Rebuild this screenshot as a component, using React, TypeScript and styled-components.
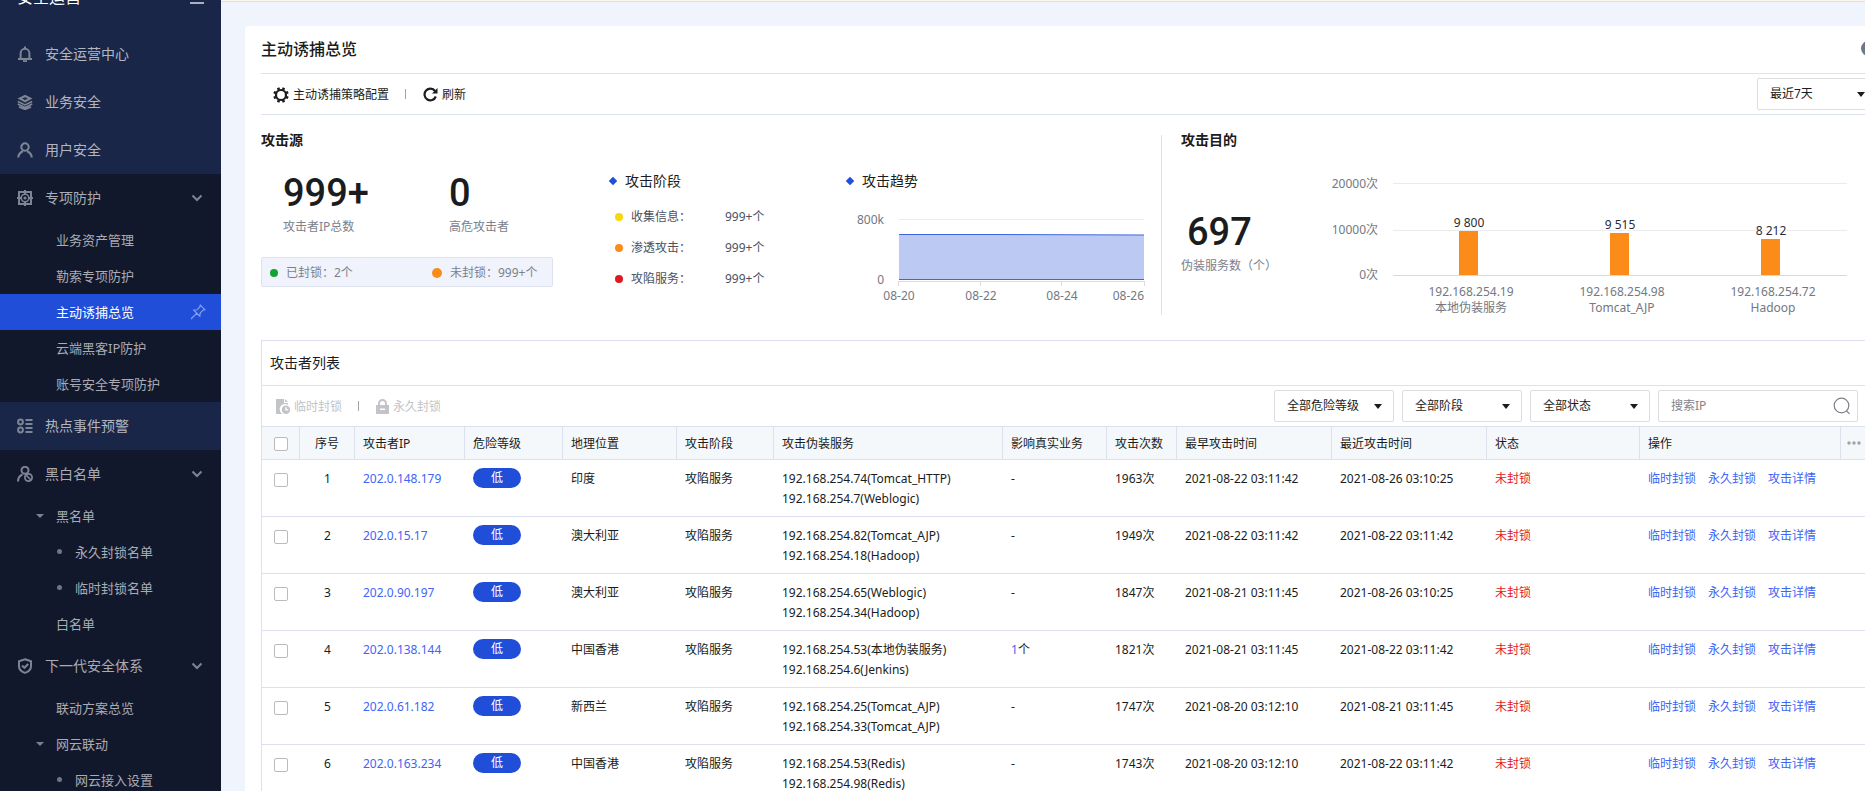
import React from "react";
import styled, { createGlobalStyle } from "styled-components";

const GlobalStyle = createGlobalStyle`
  *, *::before, *::after { box-sizing: border-box; }
  body {
    margin: 0;
    background: #f0f4fc;
    color: #1a1c20;
    font-family: "Noto Sans", "Noto Sans CJK SC", sans-serif;
    font-size: 12px;
    line-height: 20px;
  }
  button, input, select { font: inherit; color: inherit; }
  ul { list-style: none; margin: 0; padding: 0; }
  h1, h2, h3, p { margin: 0; }
`;

/* ---------- shell ---------- */

const Shell = styled.div`
  display: flex;
  height: 100vh;
  overflow: hidden;
`;

const Sidebar = styled.nav`
  flex: none;
  width: 221px;
  overflow: hidden;
  background: #12182b;
  color: #a9acb5;
`;

const SidebarScroll = styled.div`
  margin-top: -36px;
`;

const SidebarHeader = styled.div`
  display: flex;
  align-items: center;
  justify-content: space-between;
  height: 66px;
  padding: 0 17px;
  background: #1a2647;
  color: #fff;
  font-size: 16px;
  line-height: 24px;
`;

const IconButton = styled.button`
  display: flex;
  padding: 0;
  border: 0;
  background: none;
  color: #a9b0c2;
`;

const NavItem = styled.a<{ $navy?: boolean }>`
  display: flex;
  align-items: center;
  gap: 12px;
  height: 48px;
  padding: 0 18px 0 17px;
  background: ${(p) => (p.$navy ? "#1a2647" : "transparent")};
  color: ${(p) => (p.$navy ? "#b1b6c2" : "#a9acb5")};
  font-size: 14px;
  text-decoration: none;

  svg { flex: none; color: #7d8494; }
  span { flex: 1; }
`;

const SubItem = styled.a<{ $active?: boolean; $level?: number }>`
  display: flex;
  align-items: center;
  height: 36px;
  padding: 0 15px 1px ${(p) => (p.$level === 2 ? 57 : 36)}px;
  background: ${(p) => (p.$active ? "#204ed9" : "transparent")};
  color: ${(p) => (p.$active ? "#fff" : "#a9acb5")};
  font-size: 13px;
  text-decoration: none;

  span { flex: 1; }
`;

const Caret = styled.i<{ $hidden?: boolean }>`
  width: 8px;
  margin-right: 12px;
  border: 4px solid transparent;
  border-width: 4px 4px 0;
  border-top-color: ${(p) => (p.$hidden ? "transparent" : "#7d818c")};
`;

const Bullet = styled.i`
  width: 5px;
  height: 5px;
  margin-right: 13px;
  border-radius: 50%;
  background: #71757f;
`;

const Main = styled.main`
  flex: 1;
  min-width: 0;
  overflow: hidden;
  border-top: 1px solid #fdf7ec;
  box-shadow: inset 0 1px #f2dcc4;
`;

const Card = styled.section`
  margin: 25px -28px 0 24px;
  padding: 0 16px;
  border-radius: 3px;
  background: #fff;
`;

const CardHeader = styled.header`
  display: flex;
  align-items: center;
  justify-content: space-between;
  height: 48px;
  padding: 0 1px 2px 0;
  border-bottom: 1px solid #dde3ec;
`;

const Title = styled.h1`
  font-size: 16px;
  font-weight: 500;
  line-height: 24px;
`;

const InfoDot = styled.button`
  width: 15px;
  height: 15px;
  padding: 0;
  border: 0;
  border-radius: 50%;
  background: #6f7787;
  color: #fff;
  font-size: 10px;
  line-height: 15px;
`;

const Toolbar = styled.div<{ $list?: boolean }>`
  display: flex;
  align-items: center;
  height: 41px;
  padding: ${(p) => (p.$list ? "0 18px 0 14px" : "0 0 0 12px")};
  border-bottom: 1px solid ${(p) => (p.$list ? "#dde1ed" : "#dde3ec")};
`;

const ToolButton = styled.button`
  display: flex;
  align-items: center;
  gap: 4px;
  padding: 1px 0 0;
  border: 0;
  background: none;

  &:disabled { color: #c2c4c8; }
`;

const Separator = styled.i`
  width: 1px;
  height: 10px;
  margin: 0 17px 0 16px;
  background: #a0a4ac;
`;

const Spacer = styled.div`
  flex: 1;
`;

const SelectBox = styled.label`
  display: grid;
  align-items: center;
  width: 120px;

  > * { grid-area: 1 / 1; }
`;

const Select = styled.select`
  appearance: none;
  width: 100%;
  height: 32px;
  padding: 0 12px;
  border: 1px solid #dcdddf;
  border-radius: 2px;
  background: #fff;
`;

const SelectArrow = styled.i`
  justify-self: end;
  width: 8px;
  height: 5px;
  margin-right: 12px;
  border: 4px solid transparent;
  border-width: 5px 4px 0;
  border-top-color: #1a1c20;
  pointer-events: none;
`;

const Filters = styled.div`
  display: flex;
  gap: 8px;
`;

const SearchBox = styled.label`
  display: flex;
  align-items: center;
  width: 200px;
  height: 32px;
  padding: 0 6px 0 12px;
  border: 1px solid #dcdddf;
  border-radius: 2px;
  color: #7c8088;
`;

const SearchInput = styled.input`
  flex: 1;
  min-width: 0;
  padding: 0;
  border: 0;
  outline: 0;
  background: none;

  &::placeholder { color: #7f838a; opacity: 1; }
`;

/* ---------- overview ---------- */

const Overview = styled.div`
  display: grid;
  grid-template-columns: 900fr 716fr;
  padding: 20px 0 25px;
`;

const SourcePane = styled.section`
  display: grid;
  grid-template-columns: 348px 237px 1fr;
  grid-template-rows: 12px 1fr;
  height: 180px;
`;

const TargetPane = styled.section`
  display: flex;
  padding-left: 19px;
  border-left: 1px solid #dfe0ea;
`;

const PaneTitle = styled.h2`
  grid-column: 1 / -1;
  margin-top: -5px;
  font-size: 14px;
  font-weight: 600;
  line-height: 20px;
`;

const Counters = styled.div`
  display: flex;
  flex-direction: column;
  padding-top: 22px;
`;

const CounterRow = styled.div`
  display: grid;
  grid-template-columns: 166px auto;
  padding-left: 22px;
`;

const Figure = styled.p`
  font-family: Roboto, "Noto Sans", sans-serif;
  font-size: 38px;
  font-weight: 500;
  line-height: 48px;
`;

const Caption = styled.p`
  color: #7b818d;
`;

const BlockSummary = styled.div`
  display: grid;
  grid-template-columns: 162px auto;
  align-items: center;
  width: 292px;
  height: 30px;
  margin-top: 20px;
  padding: 1px 0 0 8px;
  border: 1px solid #dde2ef;
  border-radius: 2px;
  background: #f0f3fb;
  color: #7b818d;
`;

const Dotted = styled.span<{ $color: string; $size?: number }>`
  display: flex;
  align-items: center;
  gap: 8px;

  &::before {
    content: "";
    width: ${(p) => p.$size || 8}px;
    height: ${(p) => p.$size || 8}px;
    border-radius: 50%;
    background: ${(p) => p.$color};
  }
`;

const SubBlock = styled.div`
  padding-top: 24px;
`;

const SubTitle = styled.h3`
  display: flex;
  align-items: center;
  gap: 9px;
  font-size: 14px;
  font-weight: 400;
  line-height: 20px;

  &::before {
    content: "";
    width: 6px;
    height: 6px;
    margin-left: 1px;
    background: #204ed9;
    transform: rotate(45deg);
  }
`;

const StageList = styled.ul`
  padding: 10px 0 0 6px;
`;

const Stage = styled.li`
  display: grid;
  grid-template-columns: 110px auto;
  align-items: center;
  height: 31px;
  color: #4b5160;
`;

const TrendChart = styled.svg`
  display: block;
  margin-top: 15px;
`;

const ServiceCount = styled.div`
  width: 140px;

  ${Figure} { margin-top: 58px; padding-left: 6px; }
`;

const ChartText = styled.text<{ $dark?: boolean }>`
  font-size: 12px;
  fill: ${(p) => (p.$dark ? "#2b2d33" : "#737883")};
  stroke: ${(p) => (p.$dark ? "#fff" : "none")};
  stroke-width: 3px;
  paint-order: stroke;
`;

/* ---------- list ---------- */

const Panel = styled.section`
  border: 1px solid #dde1ed;
`;

const PanelTitle = styled.h2`
  height: 45px;
  padding-left: 8px;
  border-bottom: 1px solid #dde1ed;
  font-size: 14px;
  font-weight: 400;
  line-height: 44px;
`;

const Table = styled.table`
  width: 100%;
  table-layout: fixed;
  border-collapse: separate;
  border-spacing: 0;
`;

const Th = styled.th<{ $center?: boolean; $tight?: boolean }>`
  height: 33px;
  padding: ${(p) => (p.$tight ? "0 0 5px 6px" : p.$center ? "1px 0 0" : "1px 0 0 8px")};
  border-right: 1px solid #dde1ed;
  border-bottom: 1px solid #dde1ed;
  background: #f4f8fb;
  font-weight: 400;
  text-align: ${(p) => (p.$center ? "center" : "left")};
  white-space: nowrap;
`;

const Td = styled.td<{ $center?: boolean; $danger?: boolean }>`
  height: 57px;
  padding: 9px 0 7px ${(p) => (p.$center ? 0 : 8)}px;
  border-bottom: 1px solid #dde1ed;
  color: ${(p) => (p.$danger ? "#e0191f" : "inherit")};
  text-align: ${(p) => (p.$center ? "center" : "left")};
  vertical-align: top;
  white-space: nowrap;
`;

const Checkbox = styled.input`
  appearance: none;
  display: block;
  width: 14px;
  height: 14px;
  margin: 0 12px;
  border: 1px solid #b9bbbf;
  border-radius: 2px;
  background: #fff;

  td & { margin-top: 4px; }
`;

const Link = styled.a`
  color: #4264f5;
  text-decoration: none;
`;

const Actions = styled.div`
  display: flex;
  gap: 12px;
`;

const Level = styled.span`
  display: block;
  width: 48px;
  height: 20px;
  margin-top: -1px;
  border-radius: 10px;
  background: #204ed9;
  color: #fff;
  text-align: center;
`;

/* ---------- icons ---------- */

const icons: Record<string, React.ReactNode> = {
  bell: (
    <g fill="none" stroke="currentColor" strokeWidth="2">
      <path d="M1 13h14M3.6 13V7.200a4.400 4.400 0 0 1 8.800 0V13M8 2.800V.6" />
      <path d="M6 15.200h4" />
    </g>
  ),
  layers: (
    <g>
      <path fill="currentColor" fillRule="evenodd" d="M8 .8 15.500 4.600 8 8.400.5 4.600zM8 3.200 5.200 4.600 8 6l2.800-1.400z" />
      <path fill="none" stroke="currentColor" strokeWidth="1.700" d="m.8 7.400 7.200 3.500 7.200-3.500M.8 10l7.200 3.500 7.200-3.500M2 12.900l6 2.500 6-2.500" />
    </g>
  ),
  user: (
    <g fill="none" stroke="currentColor" strokeWidth="2.100">
      <circle cx="8" cy="5" r="3.700" />
      <path d="M1.300 15.500c0-3 1.800-5 4.700-6.500M14.700 15.500c0-3-1.800-5-4.700-6.500" />
    </g>
  ),
  target: (
    <g fill="none" stroke="currentColor">
      <path strokeWidth="2" d="M2 2h12v12H2zM8 0v4M8 12v4M0 8h4M12 8h4" />
      <circle cx="8" cy="8" r="3.800" strokeWidth="1.600" />
      <circle cx="8" cy="8" r="1.600" fill="currentColor" stroke="none" />
    </g>
  ),
  list: (
    <g fill="none" stroke="currentColor" strokeWidth="2">
      <circle cx="3.500" cy="4" r="2.400" />
      <circle cx="3.500" cy="12" r="2.400" />
      <path d="M8.500 2h7M8.500 6h7M8.500 10h7M8.500 14h7" />
    </g>
  ),
  userBan: (
    <g fill="none" stroke="currentColor" strokeWidth="2">
      <circle cx="8" cy="4.300" r="3.500" />
      <path d="M1 15.500c0-3.500 1.700-5.800 4.500-7" />
      <circle cx="11.500" cy="11.500" r="3.600" strokeWidth="1.800" />
      <path strokeWidth="1.700" d="m9 9 5 5" />
    </g>
  ),
  shield: (
    <g fill="none" stroke="currentColor" strokeWidth="2">
      <path d="m8 1.300 6 1.900v5c0 3.400-2.400 5.400-6 6.700-3.600-1.300-6-3.300-6-6.700v-5z" />
      <path d="m5 7.600 2.400 2.200 3.800-3.800" />
    </g>
  ),
};

const Icon = ({ name }: { name: string }) => (
  <svg width="16" height="16" viewBox="0 0 16 16" aria-hidden="true">
    {icons[name]}
  </svg>
);

const Chevron = () => (
  <svg width="12" height="8" viewBox="0 0 12 8" fill="none" stroke="currentColor" strokeWidth="2" aria-hidden="true">
    <path d="m1.500 1.500 4.500 4.500 4.500-4.500" />
  </svg>
);

const MenuIcon = () => (
  <svg width="14" height="14" viewBox="0 0 14 14" stroke="currentColor" strokeWidth="2" aria-hidden="true">
    <path d="M0 1h14M0 7h14M0 13h14" />
  </svg>
);

const PinIcon = () => (
  <svg width="16" height="16" viewBox="0 0 16 16" fill="none" stroke="#86a0ec" strokeWidth="1.200" aria-hidden="true">
    <path d="M10.300 1.200 14.800 5.700 13 6.200 10.200 9l-.4 3.200-6-6L7 5.800 9.800 3zM6.600 9.400 1 15" />
  </svg>
);

const GearIcon = () => (
  <svg width="16" height="16" viewBox="0 0 16 16" fill="none" stroke="currentColor" aria-hidden="true">
    <circle cx="8" cy="8" r="5" strokeWidth="2.200" />
    <path
      strokeWidth="2.600"
      d="M6 3 5.100.8M10 3l.9-2.200M6 13l-.9 2.200M10 13l.9 2.200M3 6 .8 5.100M3 10l-2.200.9M13 6l2.200-.9M13 10l2.200.9"
    />
  </svg>
);

const RefreshIcon = () => (
  <svg width="15" height="15" viewBox="0 0 15 15" fill="none" stroke="currentColor" strokeWidth="2.200" aria-hidden="true">
    <path d="M12 4A5.800 5.800 0 1 0 12.800 9.500" />
    <path d="M14.500 1v5.500H9z" fill="currentColor" stroke="none" />
  </svg>
);

const FileClockIcon = () => (
  <svg width="14" height="15" viewBox="0 0 14 15" fill="currentColor" aria-hidden="true">
    <path d="M0 0h8v4h4v1.800A5 5 0 0 0 6.200 15H0zM9 0l3 3H9z" />
    <path d="M10 6.600a4.200 4.200 0 1 0 0 8.400 4.200 4.200 0 0 0 0-8.400zm-.7 1.600h1.400V10.200h1.500v1.400H9.300z" fillRule="evenodd" />
  </svg>
);

const LockIcon = () => (
  <svg width="13" height="15" viewBox="0 0 13 15" aria-hidden="true">
    <path fill="none" stroke="currentColor" strokeWidth="2" d="M3 7V4.500a3.500 3.500 0 0 1 7 0V7" />
    <path fill="currentColor" fillRule="evenodd" d="M0 6h13v9H0zm4 3.500V11h5V9.500z" />
  </svg>
);

const SearchIcon = () => (
  <svg width="18" height="18" viewBox="0 0 18 18" fill="none" stroke="currentColor" strokeWidth="1.200" aria-hidden="true">
    <circle cx="8.500" cy="8.500" r="7.300" />
    <path d="m13.500 13.800 3 3" />
  </svg>
);

const MoreIcon = () => (
  <svg width="14" height="4" viewBox="0 0 14 4" fill="#9fa3aa" aria-hidden="true">
    <circle cx="2" cy="2" r="1.700" />
    <circle cx="7" cy="2" r="1.700" />
    <circle cx="12" cy="2" r="1.700" />
  </svg>
);

/* ---------- data ---------- */

type Child = { label: string; active?: boolean; open?: boolean; level?: number };
type Group = { label: string; icon: string; navy?: boolean; children?: Child[] };

const menu: Group[] = [
  { label: "安全运营中心", icon: "bell", navy: true },
  { label: "业务安全", icon: "layers", navy: true },
  { label: "用户安全", icon: "user", navy: true },
  {
    label: "专项防护",
    icon: "target",
    children: [
      { label: "业务资产管理" },
      { label: "勒索专项防护" },
      { label: "主动诱捕总览", active: true },
      { label: "云端黑客IP防护" },
      { label: "账号安全专项防护" },
    ],
  },
  { label: "热点事件预警", icon: "list", navy: true },
  {
    label: "黑白名单",
    icon: "userBan",
    children: [
      { label: "黑名单", open: true },
      { label: "永久封锁名单", level: 2 },
      { label: "临时封锁名单", level: 2 },
      { label: "白名单" },
    ],
  },
  {
    label: "下一代安全体系",
    icon: "shield",
    children: [
      { label: "联动方案总览" },
      { label: "网云联动", open: true },
      { label: "网云接入设置", level: 2 },
    ],
  },
];

const stages = [
  { label: "收集信息", color: "#fad60c" },
  { label: "渗透攻击", color: "#fb8c1a" },
  { label: "攻陷服务", color: "#e0191f" },
];

const columns = [
  { label: "序号", width: 55, center: true },
  { label: "攻击者IP", width: 110 },
  { label: "危险等级", width: 98 },
  { label: "地理位置", width: 114 },
  { label: "攻击阶段", width: 97 },
  { label: "攻击伪装服务" },
  { label: "影响真实业务", width: 104 },
  { label: "攻击次数", width: 70 },
  { label: "最早攻击时间", width: 155 },
  { label: "最近攻击时间", width: 155 },
  { label: "状态", width: 153 },
  { label: "操作", width: 201 },
];

const rows = [
  { ip: "202.0.148.179", place: "印度", services: ["192.168.254.74(Tomcat_HTTP)", "192.168.254.7(Weblogic)"], real: 0, times: 1963, first: "2021-08-22 03:11:42", last: "2021-08-26 03:10:25" },
  { ip: "202.0.15.17", place: "澳大利亚", services: ["192.168.254.82(Tomcat_AJP)", "192.168.254.18(Hadoop)"], real: 0, times: 1949, first: "2021-08-22 03:11:42", last: "2021-08-22 03:11:42" },
  { ip: "202.0.90.197", place: "澳大利亚", services: ["192.168.254.65(Weblogic)", "192.168.254.34(Hadoop)"], real: 0, times: 1847, first: "2021-08-21 03:11:45", last: "2021-08-26 03:10:25" },
  { ip: "202.0.138.144", place: "中国香港", services: ["192.168.254.53(本地伪装服务)", "192.168.254.6(Jenkins)"], real: 1, times: 1821, first: "2021-08-21 03:11:45", last: "2021-08-22 03:11:42" },
  { ip: "202.0.61.182", place: "新西兰", services: ["192.168.254.25(Tomcat_AJP)", "192.168.254.33(Tomcat_AJP)"], real: 0, times: 1747, first: "2021-08-20 03:12:10", last: "2021-08-21 03:11:45" },
  { ip: "202.0.163.234", place: "中国香港", services: ["192.168.254.53(Redis)", "192.168.254.98(Redis)"], real: 0, times: 1743, first: "2021-08-20 03:12:10", last: "2021-08-22 03:11:42" },
];

const bars = [
  { x: 138, height: 44, value: "9 800", ip: "192.168.254.19", service: "本地伪装服务" },
  { x: 289, height: 42, value: "9 515", ip: "192.168.254.98", service: "Tomcat_AJP" },
  { x: 440, height: 36, value: "8 212", ip: "192.168.254.72", service: "Hadoop" },
];

/* ---------- parts ---------- */

const Dropdown = ({ name, value }: { name: string; value: string }) => (
  <SelectBox>
    <Select aria-label={name} defaultValue={value}>
      <option>{value}</option>
    </Select>
    <SelectArrow />
  </SelectBox>
);

const SideMenu = () => (
  <Sidebar aria-label="安全运营">
    <SidebarScroll>
      <SidebarHeader>
        安全运营
        <IconButton type="button" aria-label="收起菜单">
          <MenuIcon />
        </IconButton>
      </SidebarHeader>
      {menu.map((group) => (
        <React.Fragment key={group.label}>
          <NavItem href="#" $navy={group.navy}>
            <Icon name={group.icon} />
            <span>{group.label}</span>
            {group.children && <Chevron />}
          </NavItem>
          {group.children?.map((item) => (
            <SubItem key={item.label} href="#" $active={item.active} $level={item.level}>
              {item.level === 2 ? <Bullet /> : <Caret $hidden={!item.open} />}
              <span>{item.label}</span>
              {item.active && <PinIcon />}
            </SubItem>
          ))}
        </React.Fragment>
      ))}
    </SidebarScroll>
  </Sidebar>
);

const AttackTrend = () => (
  <TrendChart width="302" height="104" viewBox="0 0 302 104" role="img" aria-label="攻击趋势">
    <path d="M53 13.500h245" stroke="#ebebeb" />
    <path d="M53 28.500 298 29v45H53z" fill="#bcc9f3" />
    <path d="M53 28.500h100L298 29M53 73.500h245" fill="none" stroke="#3c66dc" />
    <path d="M53 75.500h245M52.500 75v5M134.500 75v5M215.500 75v5M298.500 75v5" stroke="#dcdcdc" />
    <ChartText x="38" y="18" textAnchor="end">800k</ChartText>
    <ChartText x="38" y="78" textAnchor="end">0</ChartText>
    <ChartText x="53" y="94" textAnchor="middle">08-20</ChartText>
    <ChartText x="135" y="94" textAnchor="middle">08-22</ChartText>
    <ChartText x="216" y="94" textAnchor="middle">08-24</ChartText>
    <ChartText x="298" y="94" textAnchor="end">08-26</ChartText>
  </TrendChart>
);

const TargetChart = () => (
  <svg width="530" height="180" viewBox="0 0 530 180" role="img" aria-label="攻击目的">
    <path d="M72 48.500h454M72 95.500h454" stroke="#ebebeb" />
    <path d="M72 140.500h454" stroke="#d9d9d9" />
    <ChartText x="57" y="53" textAnchor="end">20000次</ChartText>
    <ChartText x="57" y="99" textAnchor="end">10000次</ChartText>
    <ChartText x="57" y="144" textAnchor="end">0次</ChartText>
    {bars.map((bar) => (
      <g key={bar.ip}>
        <rect x={bar.x} y={140 - bar.height} width="19" height={bar.height} fill="#fb8c1a" />
        <ChartText $dark x={bar.x + 10} y={136 - bar.height} textAnchor="middle">{bar.value}</ChartText>
        <ChartText x={bar.x + 12} y="161" textAnchor="middle">{bar.ip}</ChartText>
        <ChartText x={bar.x + 12} y="177" textAnchor="middle">{bar.service}</ChartText>
      </g>
    ))}
  </svg>
);

const AttackerTable = () => (
  <Table>
    <colgroup>
      <col width={38} />
      {columns.map((c) => (
        <col key={c.label} width={c.width} />
      ))}
      <col width={35} />
    </colgroup>
    <thead>
      <tr>
        <Th $center>
          <Checkbox type="checkbox" aria-label="全选" />
        </Th>
        {columns.map((c) => (
          <Th key={c.label} $center={c.center}>{c.label}</Th>
        ))}
        <Th $tight aria-label="更多">
          <MoreIcon />
        </Th>
      </tr>
    </thead>
    <tbody>
      {rows.map((row, i) => (
        <tr key={row.ip}>
          <Td $center>
            <Checkbox type="checkbox" aria-label={row.ip} />
          </Td>
          <Td $center>{i + 1}</Td>
          <Td><Link href="#">{row.ip}</Link></Td>
          <Td><Level>低</Level></Td>
          <Td>{row.place}</Td>
          <Td>攻陷服务</Td>
          <Td>
            {row.services.map((s) => (
              <div key={s}>{s}</div>
            ))}
          </Td>
          <Td>{row.real ? <><Link href="#">{row.real}</Link>个</> : "-"}</Td>
          <Td>{row.times}次</Td>
          <Td>{row.first}</Td>
          <Td>{row.last}</Td>
          <Td $danger>未封锁</Td>
          <Td>
            <Actions>
              <Link href="#">临时封锁</Link>
              <Link href="#">永久封锁</Link>
              <Link href="#">攻击详情</Link>
            </Actions>
          </Td>
          <Td />
        </tr>
      ))}
    </tbody>
  </Table>
);

export default function App() {
  return (
    <>
      <GlobalStyle />
      <Shell>
        <SideMenu />
        <Main>
          <Card>
            <CardHeader>
              <Title>主动诱捕总览</Title>
              <InfoDot type="button" aria-label="帮助" />
            </CardHeader>
            <Toolbar>
              <ToolButton type="button"><GearIcon />主动诱捕策略配置</ToolButton>
              <Separator />
              <ToolButton type="button"><RefreshIcon />刷新</ToolButton>
              <Spacer />
              <Dropdown name="时间范围" value="最近7天" />
            </Toolbar>

            <Overview>
              <SourcePane>
                <PaneTitle>攻击源</PaneTitle>
                <Counters>
                  <CounterRow>
                    <Figure>999+</Figure>
                    <Figure>0</Figure>
                    <Caption>攻击者IP总数</Caption>
                    <Caption>高危攻击者</Caption>
                  </CounterRow>
                  <BlockSummary>
                    <Dotted $color="#12a332">已封锁：2个</Dotted>
                    <Dotted $color="#fb8c1a" $size={10}>未封锁：999+个</Dotted>
                  </BlockSummary>
                </Counters>
                <SubBlock>
                  <SubTitle>攻击阶段</SubTitle>
                  <StageList>
                    {stages.map((s) => (
                      <Stage key={s.label}>
                        <Dotted $color={s.color}>{s.label}：</Dotted>
                        <span>999+个</span>
                      </Stage>
                    ))}
                  </StageList>
                </SubBlock>
                <SubBlock>
                  <SubTitle>攻击趋势</SubTitle>
                  <AttackTrend />
                </SubBlock>
              </SourcePane>

              <TargetPane>
                <ServiceCount>
                  <PaneTitle>攻击目的</PaneTitle>
                  <Figure>697</Figure>
                  <Caption>伪装服务数（个）</Caption>
                </ServiceCount>
                <TargetChart />
              </TargetPane>
            </Overview>

            <Panel>
              <PanelTitle>攻击者列表</PanelTitle>
              <Toolbar $list>
                <ToolButton type="button" disabled><FileClockIcon />临时封锁</ToolButton>
                <Separator />
                <ToolButton type="button" disabled><LockIcon />永久封锁</ToolButton>
                <Spacer />
                <Filters>
                  <Dropdown name="危险等级" value="全部危险等级" />
                  <Dropdown name="阶段" value="全部阶段" />
                  <Dropdown name="状态" value="全部状态" />
                  <SearchBox>
                    <SearchInput type="text" placeholder="搜索IP" aria-label="搜索IP" />
                    <SearchIcon />
                  </SearchBox>
                </Filters>
              </Toolbar>
              <AttackerTable />
            </Panel>
          </Card>
        </Main>
      </Shell>
    </>
  );
}
